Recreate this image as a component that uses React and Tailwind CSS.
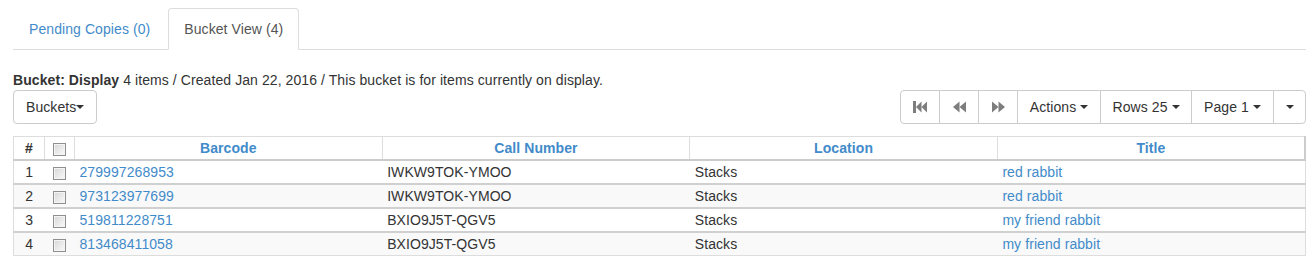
import React from 'react';

const rows = [
    { n: 1, barcode: '279997268953', call: 'IWKW9TOK-YMOO', loc: 'Stacks', title: 'red rabbit' },
    { n: 2, barcode: '973123977699', call: 'IWKW9TOK-YMOO', loc: 'Stacks', title: 'red rabbit' },
    { n: 3, barcode: '519811228751', call: 'BXIO9J5T-QGV5', loc: 'Stacks', title: 'my friend rabbit' },
    { n: 4, barcode: '813468411058', call: 'BXIO9J5T-QGV5', loc: 'Stacks', title: 'my friend rabbit' },
];

function Caret() {
    return <span className="inline-block w-0 h-0 border-t-[4px] border-t-[#333] border-x-[4px] border-x-transparent align-middle" />;
}

function Check() {
    return (
        <span className="inline-block w-[13px] h-[13px] border border-[#8f8f8f] bg-linear-to-br from-[#d6d6d6] to-[#fbfbfb] shadow-[inset_0_0_0_1px_#f4f4f4] align-middle" />
    );
}

function StepBack() {
    return (
        <svg width="14" height="12" viewBox="0 0 14 12" fill="#7d7d7d">
            <rect x="0" y="0" width="3" height="12" />
            <polygon points="3,6 8.5,0.5 8.5,11.5" />
            <polygon points="8.5,6 14,0.5 14,11.5" />
        </svg>
    );
}

function FastBack() {
    return (
        <svg width="13" height="12" viewBox="0 0 13 12" fill="#7d7d7d">
            <polygon points="0,6 6.5,0.5 6.5,11.5" />
            <polygon points="6.5,6 13,0.5 13,11.5" />
        </svg>
    );
}

function FastFwd() {
    return (
        <svg width="13" height="12" viewBox="0 0 13 12" fill="#7d7d7d">
            <polygon points="6.5,6 0,0.5 0,11.5" />
            <polygon points="13,6 6.5,0.5 6.5,11.5" />
        </svg>
    );
}

export default function App() {
    return (
        <div className="bg-white pt-[8px] pl-[13px] pr-[10px] text-[14px] leading-[20px] tracking-[0.08px] text-[#333]" style={{ fontFamily: '"Liberation Sans", Arial, sans-serif' }}>
            {/* Tabs */}
            <div className="flex border-b border-[#ddd]">
                <a className="-mb-px mr-[2px] px-[15px] py-[10px] border border-transparent rounded-t text-[#428bca]">Pending Copies (0)</a>
                <a className="-mb-px px-[15px] py-[10px] border border-[#ddd] border-b-white rounded-t bg-white text-[#555]">Bucket View (4)</a>
            </div>

            <div className="mt-[20px]">
                <b>Bucket: Display</b> 4 items / Created Jan 22, 2016 / This bucket is for items currently on display.
            </div>

            {/* Toolbar */}
            <div className="flex justify-between items-start">
                <button className="h-[34px] px-[12px] border border-[#ccc] rounded bg-white flex items-center">
                    Buckets<Caret />
                </button>
                <div className="flex h-[34px] border border-[#ccc] rounded bg-white">
                    <span className="w-[38px] flex items-center justify-center"><StepBack /></span>
                    <span className="w-[39px] flex items-center justify-center border-l border-[#ccc]"><FastBack /></span>
                    <span className="w-[39px] flex items-center justify-center border-l border-[#ccc]"><FastFwd /></span>
                    <span className="w-[83px] flex items-center justify-center gap-[4px] border-l border-[#ccc]">Actions <Caret /></span>
                    <span className="w-[91px] flex items-center justify-center gap-[4px] border-l border-[#ccc]">Rows 25 <Caret /></span>
                    <span className="w-[82px] flex items-center justify-center gap-[4px] border-l border-[#ccc]">Page 1 <Caret /></span>
                    <span className="w-[32px] flex items-center justify-center border-l border-[#ccc]"><Caret /></span>
                </div>
            </div>

            {/* Table */}
            <table className="mt-[12px] w-full table-fixed border-collapse border border-[#ddd]">
                <colgroup>
                    <col className="w-[31px]" />
                    <col className="w-[30px]" />
                    <col />
                    <col />
                    <col />
                    <col />
                </colgroup>
                <thead>
                    <tr>
                        <th className="border border-[#ddd] border-b-2 border-b-[#ccc] px-[5px] py-px text-center font-bold">#</th>
                        <th className="border border-[#ddd] border-b-2 border-b-[#ccc] px-[5px] py-px text-center"><Check /></th>
                        <th className="border border-[#ddd] border-b-2 border-b-[#ccc] px-[5px] py-px text-center font-bold text-[#428bca]">Barcode</th>
                        <th className="border border-[#ddd] border-b-2 border-b-[#ccc] px-[5px] py-px text-center font-bold text-[#428bca]">Call Number</th>
                        <th className="border border-[#ddd] border-b-2 border-b-[#ccc] px-[5px] py-px text-center font-bold text-[#428bca]">Location</th>
                        <th className="border border-[#ddd] border-b-2 border-b-[#ccc] border-r-2 border-r-[#ccc] px-[5px] py-px text-center font-bold text-[#428bca]">Title</th>
                    </tr>
                </thead>
                <tbody>
                    {rows.map((r, i) => (
                        <tr key={r.n} className={i % 2 === 1 ? 'bg-[#f9f9f9]' : 'bg-white'}>
                            <td className="border-t-2 border-t-[#d0d0d0] px-[5px] py-px text-center">{r.n}</td>
                            <td className="border-t-2 border-t-[#d0d0d0] px-[5px] py-px text-center"><Check /></td>
                            <td className="border-t-2 border-t-[#d0d0d0] px-[5px] py-px text-[#428bca]">{r.barcode}</td>
                            <td className="border-t-2 border-t-[#d0d0d0] px-[5px] py-px">{r.call}</td>
                            <td className="border-t-2 border-t-[#d0d0d0] px-[5px] py-px">{r.loc}</td>
                            <td className="border-t-2 border-t-[#d0d0d0] px-[5px] py-px text-[#428bca]">{r.title}</td>
                        </tr>
                    ))}
                </tbody>
            </table>
        </div>
    );
}
